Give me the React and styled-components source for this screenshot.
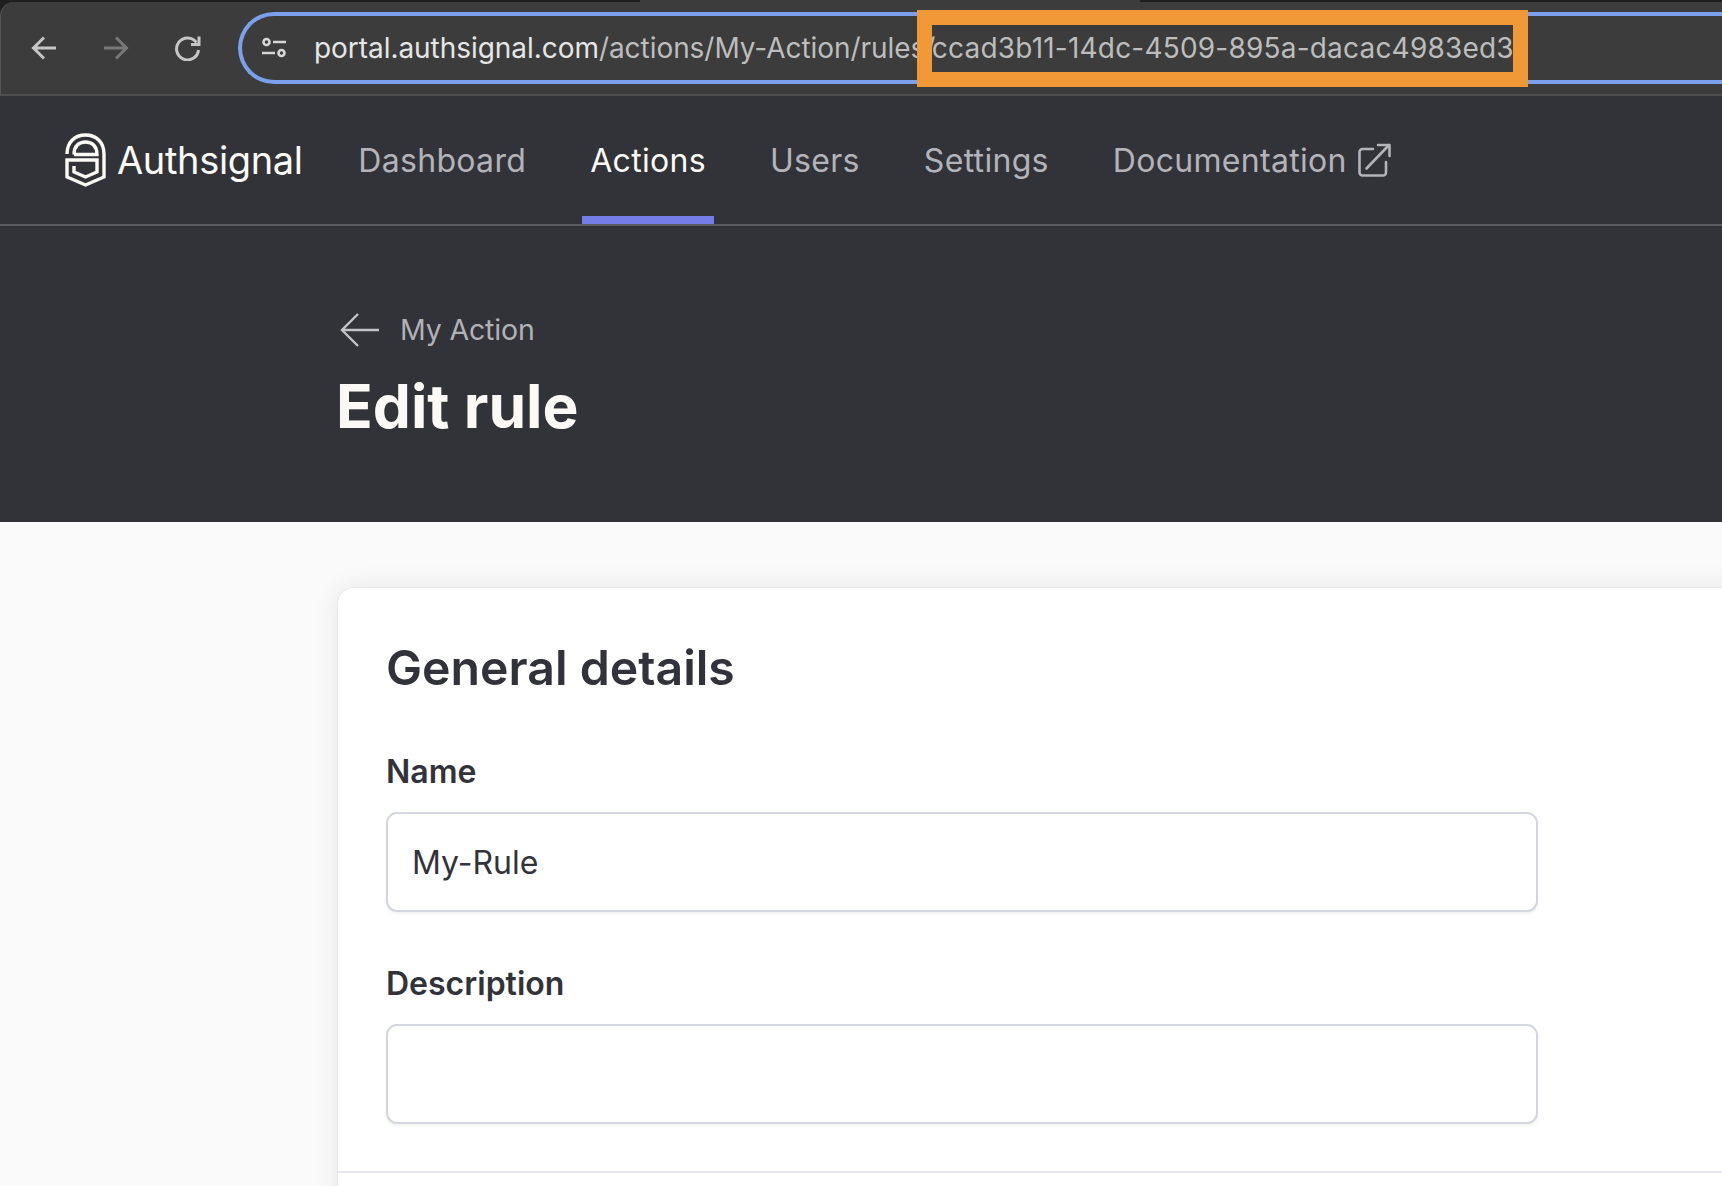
import styled, { createGlobalStyle } from 'styled-components';

const GlobalStyle = createGlobalStyle`
  html, body {
    margin: 0;
    padding: 0;
    background: #fafafa;
  }
  body {
    font-family: Inter, "Liberation Sans", sans-serif;
    overflow: hidden;
  }
  #root {
    width: 1722px;
    height: 1186px;
    overflow: hidden;
  }
`;

const BrowserBar = styled.div`
  position: relative;
  height: 96px;
  padding-top: 2px;
  box-sizing: border-box;
  background: linear-gradient(
    to right,
    #1f1f1f 640px,
    #3c3c3c 640px,
    #3c3c3c 1140px,
    #1f1f1f 1140px
  );
`;

const Toolbar = styled.div`
  height: 94px;
  box-sizing: border-box;
  display: flex;
  align-items: center;
  padding-left: 30px;
  background: #3c3c3c;
  border-top-left-radius: 14px;
  border-left: 1px solid #565656;
  border-bottom: 2px solid #4d4e50;
`;

const NavIcons = styled.div`
  display: flex;
  align-items: center;
  gap: 46px;
  margin-right: 37px;
  flex: none;
`;

const UrlPill = styled.div`
  width: 1600px;
  height: 72px;
  flex: none;
  box-sizing: border-box;
  display: flex;
  align-items: center;
  gap: 28px;
  padding-left: 20px;
  border: 4px solid #7ba1ee;
  border-right: none;
  border-radius: 36px 0 0 36px;
`;

const UrlText = styled.div`
  font-size: 28px;
  letter-spacing: -0.05px;
  color: #bdbdbd;
  white-space: nowrap;
  b {
    font-weight: 400;
    color: #e6e6e6;
  }
`;

const UrlId = styled.span`
  margin-left: -3.5px;
  letter-spacing: 0.2px;
`;

const Highlight = styled.div`
  position: absolute;
  left: 917px;
  top: 10px;
  width: 611px;
  height: 77px;
  box-sizing: border-box;
  border: 15px solid #f29937;
`;

const DarkPanel = styled.div`
  background: #323338;
`;

const TopNav = styled.nav`
  height: 130px;
  box-sizing: border-box;
  display: flex;
  align-items: stretch;
  padding-left: 65px;
  border-bottom: 2px solid #5c5d62;
`;

const Brand = styled.div`
  display: flex;
  align-items: center;
  gap: 11px;
  margin-right: 47.7px;
  color: #fbfaf5;
  font-size: 38px;
  font-weight: 400;
  letter-spacing: -0.35px;
`;

const NavTabs = styled.div`
  display: flex;
  gap: 48.1px;
`;

const NavTab = styled.a`
  display: flex;
  align-items: center;
  gap: 11px;
  padding: 8px 8px 0;
  box-sizing: border-box;
  font-size: 32px;
  letter-spacing: 0.3px;
  color: ${(p) => (p.$active ? '#fbfaf5' : '#b3b3b8')};
  border-bottom: 8px solid ${(p) => (p.$active ? '#757de8' : 'transparent')};
  height: 128px;
`;

const PageHeader = styled.header`
  height: 296px;
  box-sizing: border-box;
  padding: 87px 0 0 336px;
`;

const BackLink = styled.div`
  display: flex;
  align-items: center;
  gap: 21px;
  font-size: 28.5px;
  letter-spacing: -0.15px;
  color: #b1b1b6;
  margin-left: 4px;
  line-height: 34px;
`;

const Title = styled.h1`
  margin: 23px 0 0;
  font-size: 60.5px;
  font-weight: 700;
  line-height: 72px;
  color: #faf9f5;
`;

const Content = styled.main`
  padding: 65px 0 0 337px;
`;

const Card = styled.section`
  width: 1500px;
  box-sizing: border-box;
  background: #fff;
  border: 1px solid #e8e8ec;
  border-radius: 16px;
  box-shadow: 0 0 26px rgba(30, 30, 40, 0.08);
`;

const CardBody = styled.div`
  width: 1248px;
  box-sizing: border-box;
  padding: 51px 48px 47px;
  display: flex;
  flex-direction: column;
`;

const CardTitle = styled.h2`
  margin: 0 0 56px;
  font-size: 48.2px;
  font-weight: 600;
  line-height: 58px;
  color: #32333a;
`;

const Field = styled.div`
  display: flex;
  flex-direction: column;
  gap: 21px;
  & + & {
    margin-top: 53px;
  }
`;

const Label = styled.label`
  font-size: 32px;
  font-weight: 600;
  line-height: 38px;
  color: #32333a;
`;

const Input = styled.input`
  height: 100px;
  box-sizing: border-box;
  padding: 0 24px;
  border: 2px solid #d3d6dc;
  border-radius: 11px;
  box-shadow: 0 2px 3px rgba(0, 0, 0, 0.05);
  background: #fff;
  font: 400 32px Inter, sans-serif;
  color: #32333a;
  outline: none;
`;

const CardFooter = styled.div`
  height: 80px;
  border-top: 2px solid #e6e7eb;
`;

function ArrowIcon({ flip, color, size = 26 }) {
  return (
    <svg width={size} height={size} viewBox="0 0 26 26" fill="none" stroke={color} strokeWidth="3" style={flip ? { transform: 'scaleX(-1)' } : undefined}>
      <path d="M25 13H3M13 2.5 2.5 13 13 23.5" />
    </svg>
  );
}

function ReloadIcon() {
  return (
    <svg width="26" height="26" viewBox="0 0 26 26" fill="none" stroke="#c6c6c6" strokeWidth="3">
      <path d="M21.5 7.5A11 11 0 1 0 23.5 15" />
      <path d="M24 1.5V9.5H16" />
    </svg>
  );
}

function TuneIcon() {
  return (
    <svg width="24" height="22" viewBox="0 0 24 22" fill="none" stroke="#d6d6d6" strokeWidth="2.6" style={{ flex: 'none' }}>
      <circle cx="4.5" cy="5" r="3" />
      <path d="M11 5H24M0 16H13" />
      <circle cx="19.5" cy="16" r="3" />
    </svg>
  );
}

function Logo() {
  return (
    <svg width="41" height="54" viewBox="0 0 41 54" fill="none" stroke="#fbfaf5" strokeWidth="3.4" style={{ flex: 'none' }}>
      <path d="M2 21C2 9 10 2 20.5 2S39 9 39 21V44L20.5 52 2 44V27H32V39L20.5 44 9 39V33" />
      <path d="M9 21.5C9 13 14 9 20.5 9S32 13 32 21.5H9" />
    </svg>
  );
}

function ExternalIcon() {
  return (
    <svg width="33" height="34" viewBox="0 0 33 34" fill="none" stroke="#b3b3b8" strokeWidth="2.6" strokeLinecap="round" strokeLinejoin="round">
      <path d="M15 6H4.5A3 3 0 0 0 1.5 9V29.5A3 3 0 0 0 4.5 32.5H25A3 3 0 0 0 28 29.5V19" />
      <path d="M8.5 25.5 31 2M20 2H31.5V13" />
    </svg>
  );
}

function BackArrow() {
  return (
    <svg width="39" height="34" viewBox="0 0 39 34" fill="none" stroke="#c4c4c8" strokeWidth="2.4" style={{ flex: 'none' }}>
      <path d="M39 17H2M18 1 2 17 18 33" />
    </svg>
  );
}

export default function App() {
  return (
    <>
      <GlobalStyle />
      <BrowserBar>
        <Toolbar>
          <NavIcons>
            <ArrowIcon color="#c6c6c6" />
            <ArrowIcon flip color="#787878" />
            <ReloadIcon />
          </NavIcons>
          <UrlPill>
            <TuneIcon />
            <UrlText>
              <b>portal.authsignal.com</b>/actions/My-Action/rules/<UrlId>ccad3b11-14dc-4509-895a-dacac4983ed3</UrlId>
            </UrlText>
          </UrlPill>
        </Toolbar>
        <Highlight />
      </BrowserBar>
      <DarkPanel>
        <TopNav>
          <Brand>
            <Logo />
            Authsignal
          </Brand>
          <NavTabs>
            <NavTab>Dashboard</NavTab>
            <NavTab $active>Actions</NavTab>
            <NavTab>Users</NavTab>
            <NavTab>Settings</NavTab>
            <NavTab>
              Documentation
              <ExternalIcon />
            </NavTab>
          </NavTabs>
        </TopNav>
        <PageHeader>
          <BackLink>
            <BackArrow />
            My Action
          </BackLink>
          <Title>Edit rule</Title>
        </PageHeader>
      </DarkPanel>
      <Content>
        <Card>
          <CardBody>
            <CardTitle>General details</CardTitle>
            <Field>
              <Label>Name</Label>
              <Input defaultValue="My-Rule" />
            </Field>
            <Field>
              <Label>Description</Label>
              <Input />
            </Field>
          </CardBody>
          <CardFooter />
        </Card>
      </Content>
    </>
  );
}
